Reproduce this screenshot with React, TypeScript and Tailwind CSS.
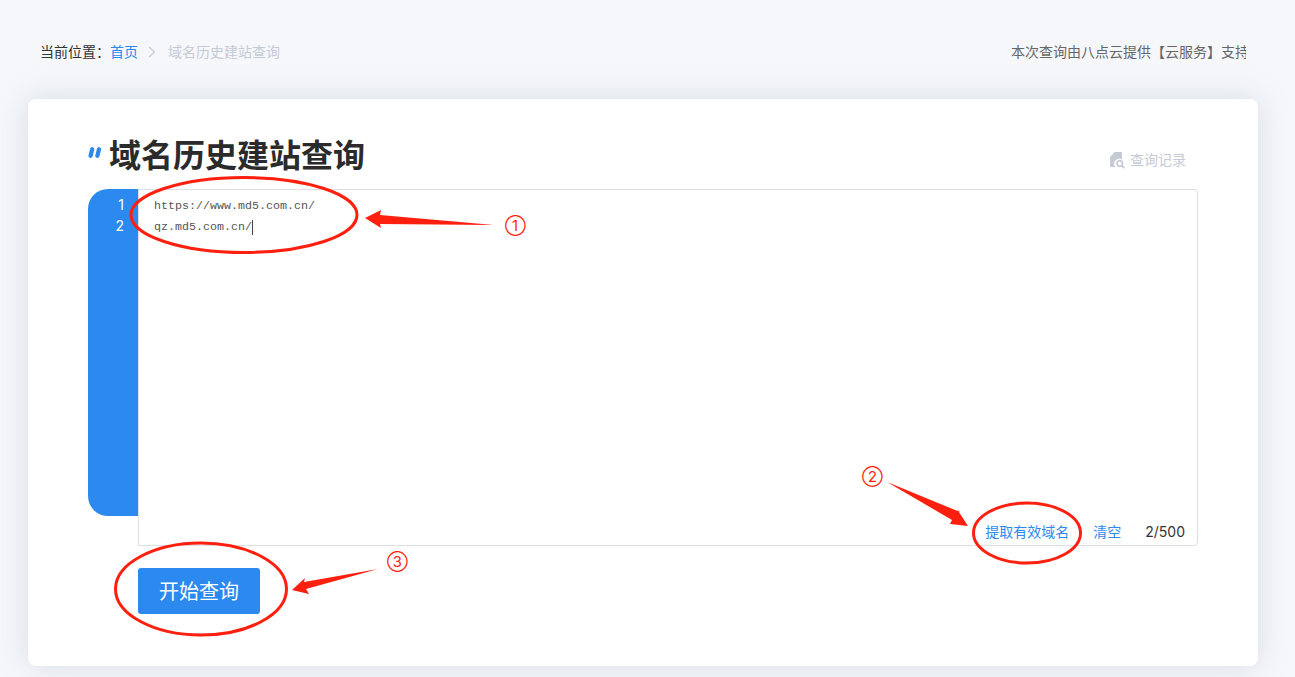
const cjk = "font-['Inter','Noto_Sans_CJK_SC',sans-serif]";

function Annotations() {
  return (
    <svg className="absolute left-0 top-0 pointer-events-none" width="1295" height="677" viewBox="0 0 1295 677" fill="none">
      <ellipse cx="244" cy="215" rx="113" ry="37.5" stroke="#ff1f0f" strokeWidth="3" />
      <polygon points="365,218 381,210 380,215 494,225 380,224 381,228" fill="#ff1f0f" />
      <ellipse cx="1027" cy="533" rx="53.5" ry="30" stroke="#ff1f0f" strokeWidth="3" />
      <polygon points="887,482 960,512 957,509 968,526 950,524 952,520" fill="#ff1f0f" />
      <ellipse cx="201" cy="589" rx="85.5" ry="46" stroke="#ff1f0f" strokeWidth="3" />
      <polygon points="292,590 305,578 304,582 378,569 306,589 309,594" fill="#ff1f0f" />
    </svg>
  );
}

function Marks() {
  return (
    <svg width="14" height="11" viewBox="0 0 14 11" className="shrink-0">
      <path d="M4.2 2.2 L2.6 8.8" stroke="#2b89f0" strokeWidth="4.2" strokeLinecap="round" />
      <path d="M11 2.2 L9.4 8.8" stroke="#2b89f0" strokeWidth="4.2" strokeLinecap="round" />
    </svg>
  );
}

function RecordIcon() {
  return (
    <svg width="15" height="17" viewBox="0 0 15 17">
      <path d="M4.5 0 H11 a1 1 0 0 1 1 1 V7.6 a5 5 0 0 0 -6.6 7.4 H1 a1 1 0 0 1 -1 -1 V5 Z" fill="#c5cbd5" />
      <circle cx="9.7" cy="11.5" r="2.8" fill="none" stroke="#c5cbd5" strokeWidth="1.7" />
      <path d="M11.7 13.6 L14.2 16.2" stroke="#c5cbd5" strokeWidth="1.8" />
    </svg>
  );
}

export default function App() {
  return (
    <div className={`relative h-[677px] w-full overflow-hidden bg-[#f5f7fb] ${cjk}`}>
      <header className="flex h-[99px] items-start justify-between pl-[40px] pr-[49px] pt-[42px] text-[14px] leading-[20px]">
        <nav className="flex items-center">
          <span className="text-[#333333]">当前位置：</span>
          <span className="text-[#2b89f0]">首页</span>
          <svg width="8" height="12" viewBox="0 0 8 12" fill="none" className="ml-[10px]">
            <path d="M1 1 L6.5 6 L1 11" stroke="#c5cbd5" strokeWidth="1.2" />
          </svg>
          <span className="ml-[12px] text-[#c5cbd5]">域名历史建站查询</span>
        </nav>
        <div className="w-[235px] overflow-hidden whitespace-nowrap text-[#666666]">本次查询由八点云提供【云服务】支持</div>
      </header>

      <main className="ml-[28px] mr-[37px] h-[567px] rounded-[8px] bg-white px-[60px] shadow-[0_0_30px_rgba(150,158,175,0.3)]">
        <div className="flex h-[90px] items-start justify-between pt-[35px]">
          <div className="flex items-start gap-[7px]">
            <div className="mt-[13px]"><Marks /></div>
            <h1 className="text-[32px] font-bold leading-[44px] text-[#2b2b2b]">域名历史建站查询</h1>
          </div>
          <div className="mr-[12px] mt-[16px] flex items-center gap-[5px] text-[14px] leading-[20px] text-[#c5cbd5]">
            <RecordIcon />
            <span>查询记录</span>
          </div>
        </div>

        <div className="flex h-[357px] items-start">
          <div className="flex h-[327px] w-[50px] flex-col rounded-l-[20px] bg-[#2b89f0] pr-[14px] pt-[5px] text-right text-[14px] leading-[21px] text-white">
            <span>1</span>
            <span>2</span>
          </div>
          <div className="relative h-full flex-1 rounded-r-[4px] border border-[#dcdfe6] pl-[15px] pt-[6px]">
            <div className="font-['Liberation_Mono',monospace] text-[11.67px] leading-[21px] text-[#555555]">
              <div>https://www.md5.com.cn/</div>
              <div className="flex items-center">
                qz.md5.com.cn/
                <span className="inline-block h-[15px] w-px bg-[#444444]" />
              </div>
            </div>
            <div className="absolute bottom-[3px] right-[12px] flex items-center text-[14px] leading-[20px]">
              <span className="text-[#2b89f0]">提取有效域名</span>
              <span className="ml-[24px] text-[#2b89f0]">清空</span>
              <span className="ml-[24px] text-[#333333]">2/500</span>
            </div>
          </div>
        </div>

        <button className="ml-[50px] mt-[22px] h-[46px] w-[122px] rounded-[3px] bg-[#2b89f0] pt-px text-[20px] text-white">开始查询</button>
      </main>

      <Annotations />
      <span className="absolute left-[505px] top-[216px] text-[15px] leading-[20px] text-[#ff1f0f]">①</span>
      <span className="absolute left-[862px] top-[467px] text-[15px] leading-[20px] text-[#ff1f0f]">②</span>
      <span className="absolute left-[387px] top-[552px] text-[15px] leading-[20px] text-[#ff1f0f]">③</span>
    </div>
  );
}
